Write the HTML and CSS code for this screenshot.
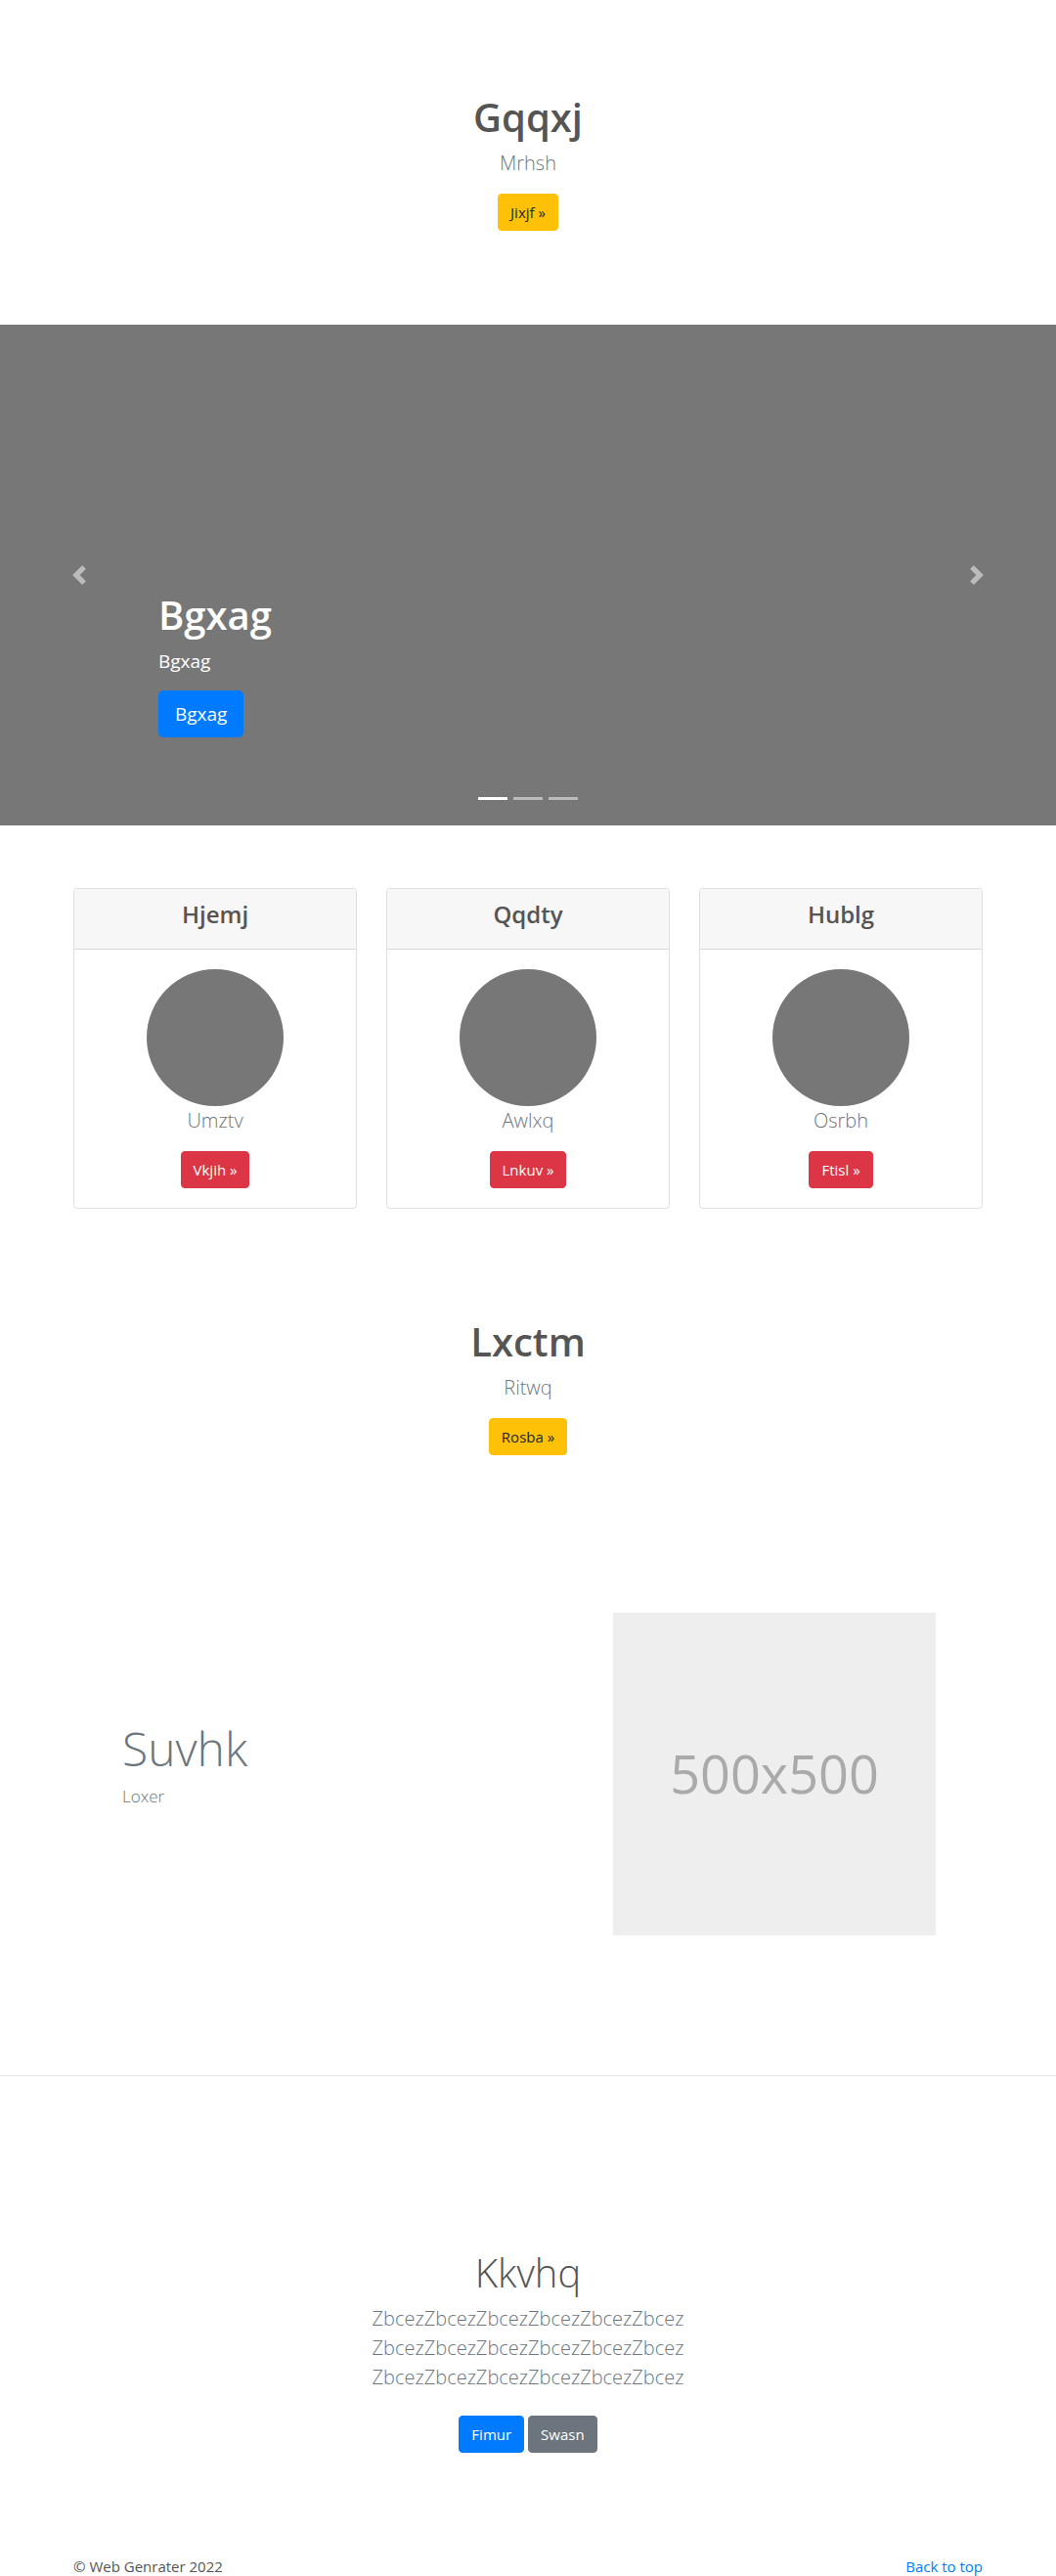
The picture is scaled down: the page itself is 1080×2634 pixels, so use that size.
FILE: index.html
```html
<!DOCTYPE html>
<html lang="en">
<head>
<meta charset="utf-8">
<title>Page</title>
<link rel="stylesheet" href="styles.css">
</head>
<body>
<section class="hero hero-top">
  <h1 class="hero-title">Gqqxj</h1>
  <p class="lead muted">Mrhsh</p>
  <a class="btn btn-warning" href="#">Jixjf »</a>
</section>

<section class="carousel">
  <a class="carousel-control prev" href="#" aria-label="Previous">
    <svg width="20" height="20" viewBox="0 0 8 8"><path fill="#fff" d="M5.25 0l-4 4 4 4 1.5-1.5L4.25 4l2.5-2.5L5.25 0z"/></svg>
  </a>
  <a class="carousel-control next" href="#" aria-label="Next">
    <svg width="20" height="20" viewBox="0 0 8 8"><path fill="#fff" d="M2.75 0l-1.5 1.5L3.75 4l-2.5 2.5L2.75 8l4-4-4-4z"/></svg>
  </a>
  <div class="carousel-caption">
    <h2 class="caption-title">Bgxag</h2>
    <p class="caption-text">Bgxag</p>
    <a class="btn btn-lg btn-primary" href="#">Bgxag</a>
  </div>
  <ol class="indicators">
    <li class="active"></li>
    <li></li>
    <li></li>
  </ol>
</section>

<section class="cards">
  <div class="container card-row">
    <div class="card">
      <div class="card-header"><h4 class="card-title">Hjemj</h4></div>
      <div class="card-body">
        <div class="avatar"></div>
        <p class="lead muted card-name">Umztv</p>
        <a class="btn btn-danger" href="#">Vkjih »</a>
      </div>
    </div>
    <div class="card">
      <div class="card-header"><h4 class="card-title">Qqdty</h4></div>
      <div class="card-body">
        <div class="avatar"></div>
        <p class="lead muted card-name">Awlxq</p>
        <a class="btn btn-danger" href="#">Lnkuv »</a>
      </div>
    </div>
    <div class="card">
      <div class="card-header"><h4 class="card-title">Hublg</h4></div>
      <div class="card-body">
        <div class="avatar"></div>
        <p class="lead muted card-name">Osrbh</p>
        <a class="btn btn-danger" href="#">Ftisl »</a>
      </div>
    </div>
  </div>
</section>

<section class="hero hero-mid">
  <h1 class="hero-title">Lxctm</h1>
  <p class="lead muted">Ritwq</p>
  <a class="btn btn-warning" href="#">Rosba »</a>
</section>

<section class="feature">
  <div class="container feature-row">
    <div class="feature-text">
      <h2 class="feature-title">Suvhk</h2>
      <p class="feature-sub">Loxer</p>
    </div>
    <div class="feature-media">
      <div class="placeholder">500x500</div>
    </div>
  </div>
</section>

<section class="cta">
  <h1 class="cta-title">Kkvhq</h1>
  <p class="lead muted cta-text">ZbcezZbcezZbcezZbcezZbcezZbcez<br>ZbcezZbcezZbcezZbcezZbcezZbcez<br>ZbcezZbcezZbcezZbcezZbcezZbcez</p>
  <div class="cta-buttons">
    <a class="btn btn-primary" href="#">Fimur</a>
    <a class="btn btn-secondary" href="#">Swasn</a>
  </div>
</section>

<footer class="footer">
  <div class="container footer-row">
    <p class="copy">© Web Genrater 2022</p>
    <a class="top-link" href="#">Back to top</a>
  </div>
</footer>
</body>
</html>
```

FILE: styles.css
```css
* { box-sizing: border-box; }

html, body {
  margin: 0;
  padding: 0;
}

body {
  font-family: "Open Sans", "Noto Sans", "Liberation Sans", sans-serif;
  font-size: 16px;
  line-height: 1.5;
  color: #212529;
  background: #fff;
}

h1, h2, h4, p { margin: 0; }

a { text-decoration: none; }

.container {
  width: 960px;
  margin: 0 auto;
  padding: 0 15px;
}

.muted { color: #6c757d; }

.lead {
  font-size: 20px;
  font-weight: 300;
  line-height: 30px;
}

.btn {
  display: inline-block;
  font-size: 15px;
  line-height: 24px;
  padding: 6px 12px;
  border: 1px solid transparent;
  border-radius: 4px;
  font-weight: 400;
}

.btn-lg {
  font-size: 19px;
  line-height: 30px;
  padding: 8px 16px;
  border-radius: 5px;
}

.btn-warning { background: #ffc107; border-color: #ffc107; color: #212529; }
.btn-primary { background: #007bff; border-color: #007bff; color: #fff; }
.btn-danger { background: #dc3545; border-color: #dc3545; color: #fff; }
.btn-secondary { background: #6c757d; border-color: #6c757d; color: #fff; }

/* Hero blocks */
.hero {
  text-align: center;
}

.hero-top { padding: 96px 0 96px; height: 332px; }
.hero-mid { padding: 112px 0 96px; }

.hero-title {
  font-size: 40px;
  line-height: 48px;
  font-weight: 600;
  color: #555;
  margin-bottom: 8px;
}

.hero .lead { margin-bottom: 16px; }

/* Carousel */
.carousel {
  position: relative;
  height: 512px;
  background: #777;
}

.carousel-control {
  position: absolute;
  top: 0;
  bottom: 0;
  width: 15%;
  display: flex;
  align-items: center;
  justify-content: center;
  opacity: .5;
}

.carousel-control.prev { left: 0; }
.carousel-control.next { right: 0; }

.carousel-caption {
  position: absolute;
  left: 15%;
  right: 15%;
  bottom: 90px;
  color: #fff;
}

.caption-title {
  font-size: 40px;
  line-height: 48px;
  font-weight: 600;
  margin-bottom: 8px;
}

.caption-text {
  font-size: 19px;
  line-height: 30px;
  margin-bottom: 15px;
}

.indicators {
  position: absolute;
  left: 0;
  right: 0;
  bottom: 26px;
  margin: 0;
  padding: 0;
  list-style: none;
  display: flex;
  justify-content: center;
}

.indicators li {
  width: 30px;
  height: 3px;
  margin: 0 3px;
  background: #fff;
  opacity: .5;
}

.indicators li.active { opacity: 1; }

/* Cards */
.cards { padding-top: 64px; }

.card-row {
  display: grid;
  grid-template-columns: repeat(3, 290px);
  column-gap: 30px;
}

.card {
  border: 1px solid rgba(0,0,0,.125);
  border-radius: 4px;
  overflow: hidden;
  text-align: center;
}

.card-header {
  background: #f7f7f7;
  border-bottom: 1px solid rgba(0,0,0,.125);
  padding: 12px 20px;
}

.card-title {
  font-size: 24px;
  line-height: 28.8px;
  font-weight: 600;
  color: #555;
  margin-bottom: 8px;
}

.card-body { padding: 20px; }

.avatar {
  width: 140px;
  height: 140px;
  border-radius: 50%;
  background: #777;
  margin: 0 auto;
}

.card-name { margin-bottom: 16px; }

/* Feature */
.feature {
  padding: 65px 0 143px;
  border-bottom: 1px solid #e5e5e5;
}

.feature-row {
  display: grid;
  grid-template-columns: 1fr 1fr;
  column-gap: 30px;
  align-items: center;
}

.feature-text {
  padding-left: 50px;
  margin-bottom: 20px;
}

.feature-title {
  font-size: 48px;
  line-height: 57.6px;
  font-weight: 300;
  color: #6c757d;
  margin-bottom: 8px;
}

.feature-sub {
  font-size: 17px;
  line-height: 24px;
  font-weight: 300;
  color: #6c757d;
}

.feature-media { padding-left: 72px; }

.placeholder {
  width: 330px;
  height: 330px;
  background: #eee;
  color: #aaa;
  font-size: 54px;
  display: flex;
  align-items: center;
  justify-content: center;
}

/* CTA */
.cta {
  text-align: center;
  padding-top: 177px;
}

.cta-title {
  font-size: 40px;
  line-height: 48px;
  font-weight: 300;
  color: #555;
  margin-bottom: 8px;
}

.cta-text { margin-bottom: 24px; }

.cta-buttons {
  display: flex;
  justify-content: center;
  gap: 4px;
}

/* Footer */
.footer { padding-top: 105px; }

.footer-row {
  display: flex;
  justify-content: space-between;
  align-items: center;
}

.copy { color: #555; font-size: 15px; }

.top-link { color: #007bff; font-size: 15px; }
```
